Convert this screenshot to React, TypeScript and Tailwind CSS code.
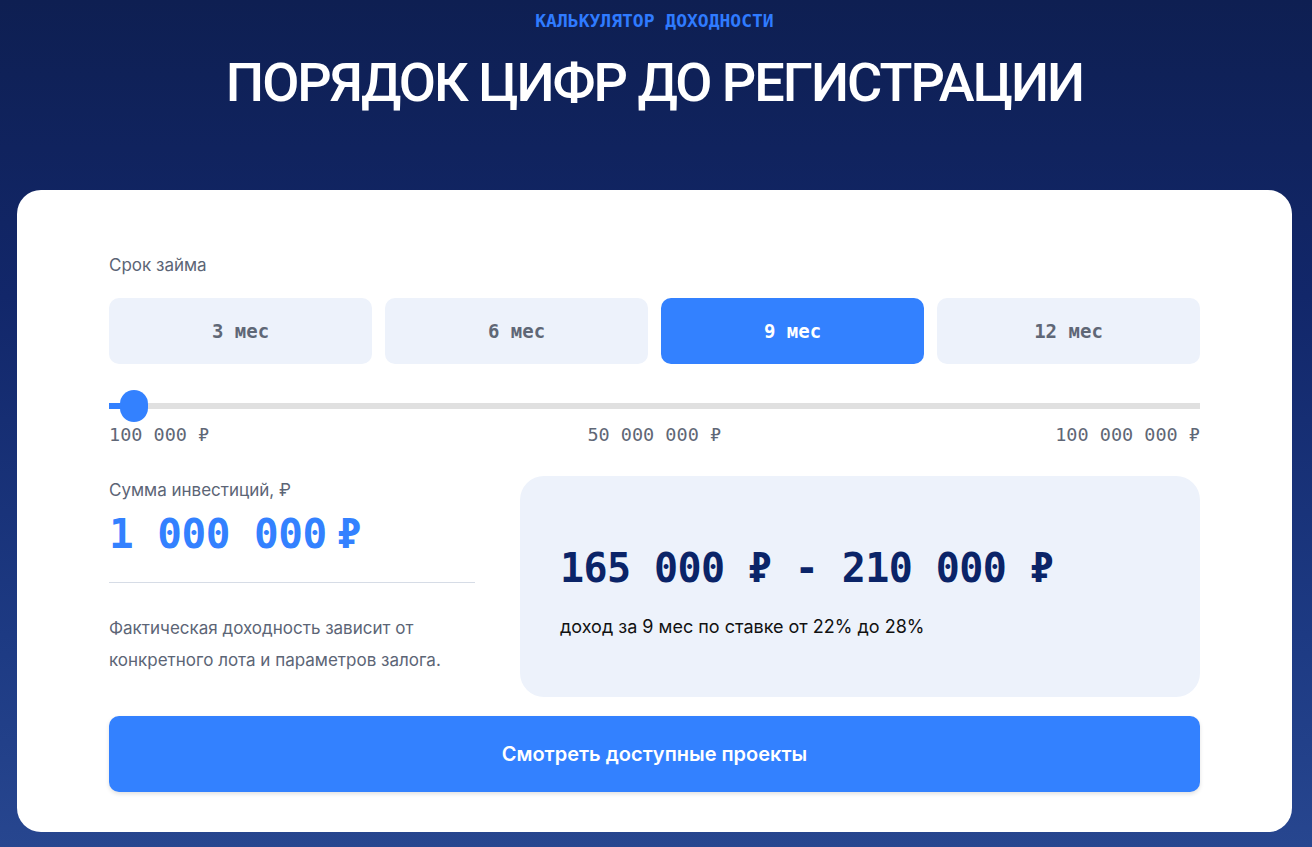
import { useState } from "react";

const MONO = "font-['DejaVu_Sans_Mono','Liberation_Mono',monospace]";
const SANS = "font-['Inter','Noto_Sans',sans-serif]";

const TERMS = [3, 6, 9, 12];

export default function App() {
  const [term, setTerm] = useState(9);

  return (
    <div
      className={`min-h-screen bg-[linear-gradient(180deg,#0e1f52_0%,#12276a_35%,#1d3a83_75%,#27468f_100%)] pl-[17px] pr-[20px] pt-[10px] pb-[15px] ${SANS}`}
    >
      <p className={`text-center text-[18px] leading-[22px] font-bold text-[#2f7bff] ${MONO}`}>
        КАЛЬКУЛЯТОР ДОХОДНОСТИ
      </p>
      <h1 className="mt-[23px] text-center font-['Roboto',sans-serif] text-[54px] leading-[56px] font-medium tracking-[-2px] text-white">
        ПОРЯДОК ЦИФР ДО РЕГИСТРАЦИИ
      </h1>

      <div className="mt-[79px] rounded-[24px] bg-white px-[92px] pt-[64px] pb-[40px]">
        <div className="text-[17px] leading-[22px] text-[#5c6576]">Срок займа</div>

        <div className="mt-[22px] grid grid-cols-4 gap-[13px]">
          {TERMS.map((m) => (
            <button
              key={m}
              type="button"
              onClick={() => setTerm(m)}
              className={`h-[66px] rounded-[10px] text-[19px] font-bold ${MONO} ${
                term === m ? "bg-[#3381ff] text-white" : "bg-[#edf2fb] text-[#5f6776]"
              }`}
            >
              {m} мес
            </button>
          ))}
        </div>

        <div className="relative mt-[26px] h-[32px]">
          <div className="absolute top-[13px] left-0 right-0 h-[6px] bg-[#e0e0e0]" />
          <div className="absolute top-[13px] left-0 h-[6px] w-[14px] bg-[#3381ff]" />
          <div className="absolute top-0 left-[11px] h-[32px] w-[28px] rounded-full bg-[#3381ff]" />
        </div>

        <div className={`mt-[2px] flex justify-between text-[18.5px] leading-[22px] text-[#5f6776] ${MONO}`}>
          <span>100 000 ₽</span>
          <span className="pl-[44px]">50 000 000 ₽</span>
          <span>100 000 000 ₽</span>
        </div>

        <div className="mt-[30px] grid grid-cols-[366px_1fr] gap-[45px]">
          <div className="pt-[3px]">
            <div className="text-[17px] leading-[22px] text-[#5c6576]">Сумма инвестиций, ₽</div>
            <div className={`mt-[9px] text-[41px] leading-[48px] font-bold tracking-[-0.5px] text-[#3381ff] ${MONO}`}>
              1 000 000<span className="ml-[10px]">₽</span>
            </div>
            <div className="mt-[24px] h-px bg-[#d6dce6]" />
            <p className="mt-[29px] text-[17px] leading-[32px] text-[#5c6576]">
              Фактическая доходность зависит от
              <br />
              конкретного лота и параметров залога.
            </p>
          </div>

          <div className="h-[221px] rounded-[24px] bg-[#edf2fb] pl-[40px] pt-[68px]">
            <div className={`text-[40px] leading-[48px] font-bold tracking-[-0.6px] text-[#0b2468] ${MONO}`}>
              165 000 ₽ - 210 000 ₽
            </div>
            <div className="mt-[23px] text-[18px] leading-[24px] text-[#111111]">
              доход за {term} мес по ставке от 22% до 28%
            </div>
          </div>
        </div>

        <button
          type="button"
          className="mt-[19px] h-[76px] w-full rounded-[10px] bg-[#3381ff] text-[20px] font-semibold text-white shadow-[0_2px_4px_rgba(0,0,0,0.12)]"
        >
          Смотреть доступные проекты
        </button>
      </div>
    </div>
  );
}
